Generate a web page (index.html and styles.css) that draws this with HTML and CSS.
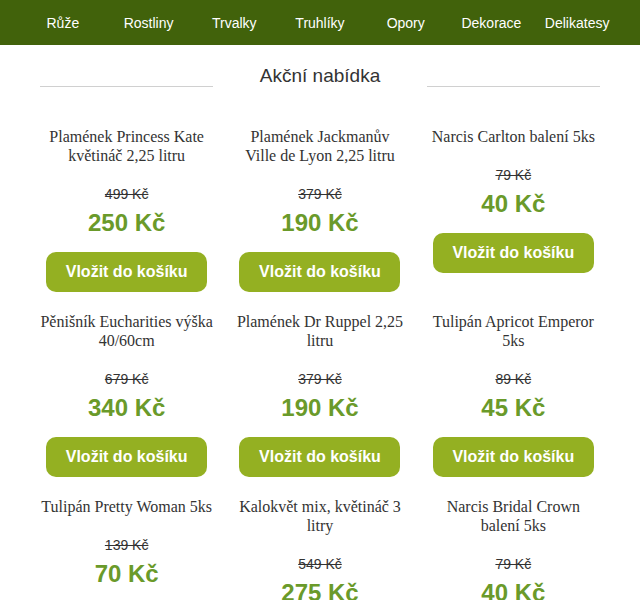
FILE: index.html
```html
<!DOCTYPE html>
<html lang="cs">
<head>
    <meta charset="UTF-8">
    <meta name="viewport" content="width=device-width, initial-scale=1.0">
    <title>Akční nabídka</title>
    <link rel="stylesheet" href="styles.css">
</head>
<body>
    <nav class="menu">
        <a href="#">Růže</a>
        <a href="#">Rostliny</a>
        <a href="#">Trvalky</a>
        <a href="#">Truhlíky</a>
        <a href="#">Opory</a>
        <a href="#">Dekorace</a>
        <a href="#">Delikatesy</a>
    </nav>
    <main>
        <div class="section-title">
            <span class="line"></span>
            <h2>Akční nabídka</h2>
            <span class="line"></span>
        </div>
        <div class="products">
            <div class="product">
                <h3>Plamének Princess Kate květináč 2,25 litru</h3>
                <div class="old-price">499 Kč</div>
                <div class="price">250 Kč</div>
                <button type="button">Vložit do košíku</button>
            </div>
            <div class="product">
                <h3>Plamének Jackmanův Ville de Lyon 2,25 litru</h3>
                <div class="old-price">379 Kč</div>
                <div class="price">190 Kč</div>
                <button type="button">Vložit do košíku</button>
            </div>
            <div class="product">
                <h3>Narcis Carlton balení 5ks</h3>
                <div class="old-price">79 Kč</div>
                <div class="price">40 Kč</div>
                <button type="button">Vložit do košíku</button>
            </div>
            <div class="product">
                <h3>Pěnišník Eucharities výška 40/60cm</h3>
                <div class="old-price">679 Kč</div>
                <div class="price">340 Kč</div>
                <button type="button">Vložit do košíku</button>
            </div>
            <div class="product">
                <h3>Plamének Dr Ruppel 2,25 litru</h3>
                <div class="old-price">379 Kč</div>
                <div class="price">190 Kč</div>
                <button type="button">Vložit do košíku</button>
            </div>
            <div class="product">
                <h3>Tulipán Apricot Emperor 5ks</h3>
                <div class="old-price">89 Kč</div>
                <div class="price">45 Kč</div>
                <button type="button">Vložit do košíku</button>
            </div>
            <div class="product">
                <h3>Tulipán Pretty Woman 5ks</h3>
                <div class="old-price">139 Kč</div>
                <div class="price">70 Kč</div>
                <button type="button">Vložit do košíku</button>
            </div>
            <div class="product">
                <h3>Kalokvět mix, květináč 3 litry</h3>
                <div class="old-price">549 Kč</div>
                <div class="price">275 Kč</div>
                <button type="button">Vložit do košíku</button>
            </div>
            <div class="product">
                <h3>Narcis Bridal Crown balení 5ks</h3>
                <div class="old-price">79 Kč</div>
                <div class="price">40 Kč</div>
                <button type="button">Vložit do košíku</button>
            </div>
        </div>
    </main>
</body>
</html>
```

FILE: styles.css
```css
body {
    font-family: "Liberation Sans", Arial, sans-serif;
    margin: 0;
    padding: 0;
    background-color: #fff;
    color: #333;
}
.menu {
    display: grid;
    grid-template-columns: repeat(7, 1fr);
    height: 45px;
    padding: 0 20px;
    background-color: #41620b;
}
.menu a {
    color: #fff;
    text-decoration: none;
    font-size: 14px;
    line-height: 46px;
    text-align: center;
}
main {
    padding: 0 30px;
}
.section-title {
    display: flex;
    align-items: flex-end;
    margin: 0 10px;
    padding-top: 20px;
}
.section-title .line {
    flex: 1;
    border-bottom: 1px solid #d0d0d0;
}
.section-title h2 {
    width: 214px;
    margin: 0;
    font-size: 19px;
    font-weight: normal;
    line-height: 22px;
    text-align: center;
    color: #333;
}
.products {
    display: grid;
    grid-template-columns: repeat(3, 1fr);
    row-gap: 20px;
    padding-top: 40px;
}
.product {
    display: flex;
    flex-direction: column;
    align-items: center;
    text-align: center;
    padding: 0 10px;
}
.product h3 {
    margin: 0 0 21px;
    font-family: "Liberation Serif", "Times New Roman", serif;
    font-size: 16px;
    font-weight: normal;
    line-height: 19px;
    color: #333;
}
.old-price {
    font-size: 14px;
    line-height: 16px;
    text-decoration: line-through;
    color: #333;
}
.price {
    margin-top: 7px;
    font-size: 24px;
    font-weight: bold;
    line-height: 28px;
    color: #6a9a2a;
}
button {
    margin-top: 15px;
    width: 161px;
    height: 40px;
    border: none;
    border-radius: 10px;
    background-color: #94b022;
    color: #fff;
    font-family: "Liberation Sans", Arial, sans-serif;
    font-size: 16px;
    font-weight: bold;
    cursor: pointer;
}
button:hover {
    background-color: #84a01a;
}
```
